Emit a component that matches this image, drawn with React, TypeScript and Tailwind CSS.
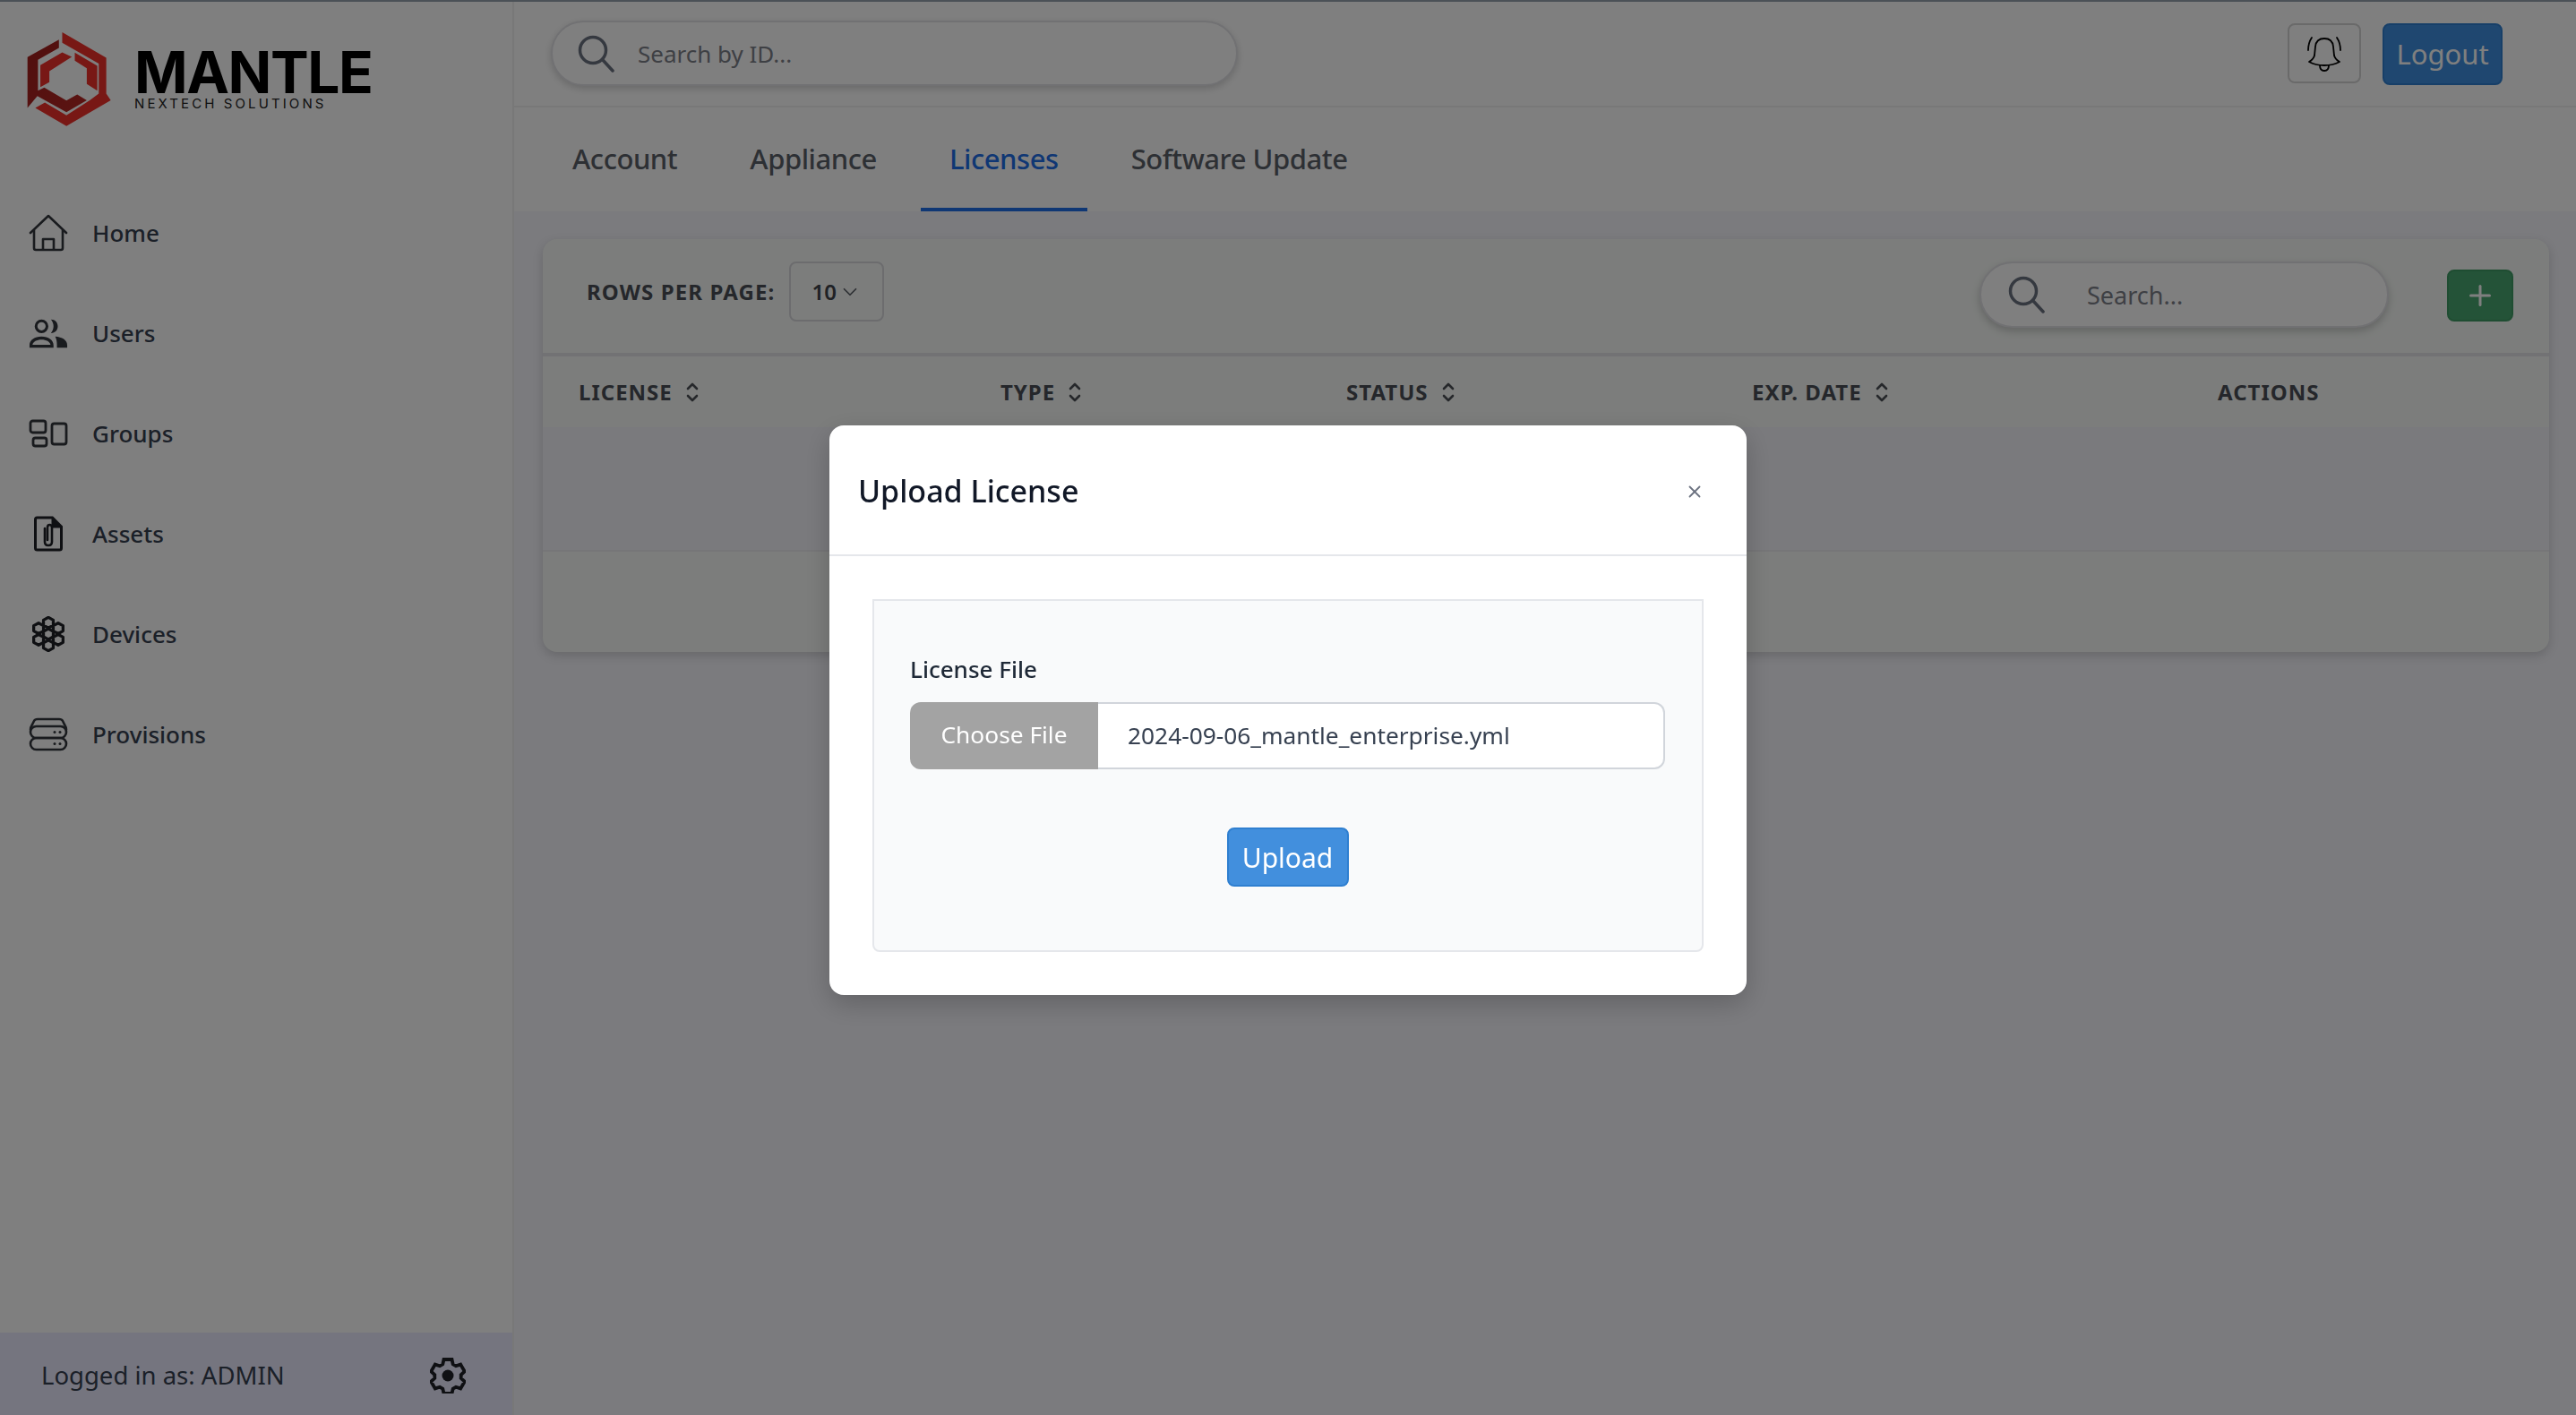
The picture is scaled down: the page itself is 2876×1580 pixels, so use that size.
import { ChevronDown, Plus, X } from "lucide-react";

const navItems = [
  { label: "Home", icon: <HomeIcon /> },
  { label: "Users", icon: <UsersIcon /> },
  { label: "Groups", icon: <GroupsIcon /> },
  { label: "Assets", icon: <AssetsIcon /> },
  { label: "Devices", icon: <DevicesIcon /> },
  { label: "Provisions", icon: <ProvisionsIcon /> },
];

const columns = ["LICENSE", "TYPE", "STATUS", "EXP. DATE"];

function HomeIcon() {
  return (
    <svg width="44" height="42" viewBox="0 0 44 42" fill="none" stroke="#33363d" strokeWidth="2.6" strokeLinejoin="round">
      <path d="M2 21 22 2l20 19" strokeLinecap="round" />
      <path d="M6 18v20q0 2 2 2h28q2 0 2-2V18" />
      <path d="M16 40V28h12v12" />
    </svg>
  );
}

function UsersIcon() {
  return (
    <svg width="46" height="34" viewBox="0 0 46 34" fill="#33363d">
      <path fillRule="evenodd" d="M15 1a8 8 0 1 1 0 16 8 8 0 0 1 0-16Zm0 3.200a4.800 4.800 0 1 0 0 9.600 4.800 4.800 0 0 0 0-9.600Z" />
      <path d="M26 1c5 0 8 3.500 8 8s-3 8-8 8c2-2.500 3-5 3-8s-1-5.500-3-8Z" />
      <path fillRule="evenodd" d="M1 34v-3c0-6 6-10 14-10s14 4 14 10v3H1Zm3.500-3.500h21c-.5-3.500-5-6-10.500-6s-10 2.500-10.500 6Z" />
      <path d="M31 21c8 .5 14 4 14 10v3H33v-4c0-3-.5-6-2-9Z" />
    </svg>
  );
}

function GroupsIcon() {
  return (
    <svg width="44" height="32" viewBox="0 0 44 32" fill="none" stroke="#33363d" strokeWidth="2.8">
      <rect x="2" y="2" width="17" height="13" rx="2.500" />
      <rect x="5" y="21" width="15" height="9" rx="2.500" />
      <rect x="26" y="5" width="16" height="23" rx="2.500" />
    </svg>
  );
}

function AssetsIcon() {
  return (
    <svg width="34" height="40" viewBox="0 0 34 40" fill="none" stroke="#1f2126">
      <path d="M2.500 4q0-2 2-2h17l10 10v24q0 2-2 2h-25q-2 0-2-2Z" strokeWidth="3" />
      <path d="M21 2l11 11H21Z" fill="#1f2126" strokeWidth="1" />
      <path d="M13 15v15q0 4 4 4t4-4V14q0-3-2.500-3T16 14v14" strokeWidth="2.600" strokeLinecap="round" transform="translate(0 -1)" />
    </svg>
  );
}

function DevicesIcon() {
  const hexes = [[20, 8], [20, 22], [20, 36], [8, 15], [32, 15], [8, 29], [32, 29]];
  return (
    <svg width="38" height="40" viewBox="0 0 40 44" fill="none" stroke="#1f2126" strokeWidth="3.600" strokeLinejoin="round">
      {hexes.map(([x, y]) => (
        <path key={`${x}-${y}`} d={`M${x} ${y - 6.500}l6 3.250v6.500l-6 3.250-6-3.250v-6.500Z`} />
      ))}
    </svg>
  );
}

function ProvisionsIcon() {
  return (
    <svg width="44" height="38" viewBox="0 0 44 38" fill="none" stroke="#33363d" strokeWidth="2.600">
      <path d="M2 14q0-3 2-6l2-4q1-2 4-2h24q3 0 4 2l2 4q2 3 2 6" />
      <rect x="2" y="10" width="40" height="13" rx="6.500" />
      <rect x="2" y="23" width="40" height="13" rx="6.500" />
      <g fill="#33363d" stroke="none">
        <circle cx="29" cy="16.500" r="1.500" />
        <circle cx="35" cy="16.500" r="1.500" />
        <circle cx="29" cy="29.500" r="1.500" />
        <circle cx="35" cy="29.500" r="1.500" />
      </g>
    </svg>
  );
}

function GearIcon() {
  return (
    <svg width="40" height="40" viewBox="0 0 40 40" fill="none" stroke="#1f2126" strokeWidth="3.800" strokeLinejoin="miter">
      <path d="M15.500 2h9l1.200 5.300 3.300 1.900 5.200-1.600 4.500 7.800-4 3.700v3.800l4 3.700-4.500 7.800-5.200-1.600-3.300 1.900-1.200 5.300h-9l-1.200-5.300-3.300-1.900-5.200 1.600-4.500-7.800 4-3.700v-3.800l-4-3.700 4.500-7.800 5.200 1.600 3.300-1.900Z" />
      <circle cx="20" cy="20" r="6.500" fill="#1f2126" stroke="none" />
    </svg>
  );
}

function SearchIcon({ color }: { color: string }) {
  return (
    <svg width="42" height="42" viewBox="0 0 42 42" fill="none" stroke={color} strokeWidth="3.500" strokeLinecap="round">
      <circle cx="17" cy="17" r="14.500" />
      <path d="m28 28 11 12" />
    </svg>
  );
}

function BellIcon() {
  return (
    <svg width="40" height="40" viewBox="0 0 40 40" fill="none" stroke="#000" strokeWidth="1.800" strokeLinecap="round" strokeLinejoin="round">
      <path d="M3 29q5-3 6-7l1-10q1-9 10-9t10 9l1 10q1 4 6 7-7 4-17 4T3 29Z" />
      <path d="M15 33q0 6 5 6t5-6" />
      <path d="M2 16Q2 8 6 2M38 16q0-8-4-14" />
    </svg>
  );
}

function SortIcon() {
  return (
    <svg width="14" height="22" viewBox="0 0 14 22" fill="none" stroke="#4d5056" strokeWidth="2.600" strokeLinecap="round" strokeLinejoin="round">
      <path d="m2 7 5-5 5 5" />
      <path d="m2 15 5 5 5-5" />
    </svg>
  );
}

function Logo() {
  return (
    <svg width="95" height="107" viewBox="90 42 284 320">
      <defs>
        <linearGradient id="mantleDark" x1="0" y1="0" x2="1" y2="1">
          <stop offset="0" stopColor="#a01f1c" />
          <stop offset="1" stopColor="#b82825" />
        </linearGradient>
      </defs>
      <path fill="url(#mantleDark)" d="M92 128 197 70v27l-70 40v103l21-10 74 43 36-20 32 19-68 40-97-54-33 40Z" />
      <path fill="#f0302a" d="m208 45 147 85v120l15 22-148 86-104-60 32-18 72 42 78-50 30-22V150L208 80Z" />
      <path fill="#f0302a" d="m250 113 75 44v83l-35-22v-53l-40-25ZM240 127l-75 48v37l-30 16v-73l73-43Z" />
    </svg>
  );
}

function Sidebar() {
  return (
    <aside className="flex h-full w-[574px] shrink-0 flex-col border-r-2 border-[#f0f0f0] bg-white">
      <div className="flex items-start gap-[25px] pl-[30px] pt-[33px]">
        <Logo />
        <div className="pt-[21px] [font-family:Inter,sans-serif] text-black">
          <div className="text-[64px] leading-[50px] font-bold tracking-[-1.4px]">MANTLE</div>
          <div className="mt-[1px] text-[15px] leading-[18px] tracking-[3.1px] text-[#222]">NEXTECH SOLUTIONS</div>
        </div>
      </div>
      <nav className="mt-[62px] flex flex-col">
        {navItems.map((item) => (
          <a key={item.label} className="flex h-[112px] items-center text-[26px] font-medium text-[#374151]">
            <span className="flex w-[103px] shrink-0 justify-center pl-[5px]">
              <span className="flex w-[44px] justify-center">{item.icon}</span>
            </span>
            {item.label}
          </a>
        ))}
      </nav>
      <div className="mt-auto flex h-[92px] items-center justify-between bg-[#eaeaff] pl-[46px] pr-[52px] pt-[4px] text-[27.500px] text-[#374151]">
        <span>Logged in as: ADMIN</span>
        <GearIcon />
      </div>
    </aside>
  );
}

function TopBar() {
  return (
    <header className="flex h-[118px] shrink-0 items-start justify-between border-b-2 border-[#f0f0f0] bg-white pl-[41px] pr-[82px] pt-[21px]">
      <div className="flex h-[73px] w-[767px] items-center gap-[25px] rounded-full border-2 border-[#e2e2e6] bg-white pl-[28px] shadow-[0_3px_8px_rgba(0,0,0,0.18)]">
        <SearchIcon color="#6b7280" />
        <span className="pt-[2px] text-[26px] text-[#7d8089]">Search by ID...</span>
      </div>
      <div className="flex items-start gap-[24px] pt-[3px]">
        <button className="flex h-[67px] w-[82px] items-center justify-center rounded-lg border-2 border-[#d4d4d4]">
          <BellIcon />
        </button>
        <button className="h-[69px] w-[134px] rounded-lg border-2 border-[#2f7fd0] bg-[#3f8fe0] text-[31px] text-white">Logout</button>
      </div>
    </header>
  );
}

function Tabs() {
  const tabs = ["Account", "Appliance", "Licenses", "Software Update"];
  return (
    <div className="flex h-[116px] shrink-0 gap-[17px] bg-white pl-[33px] text-[31px] font-medium tracking-[-0.45px] text-[#5b6069]">
      {tabs.map((tab) => (
        <div
          key={tab}
          className={
            tab === "Licenses"
              ? "flex items-center border-b-4 border-[#1f6fe8] px-[32px] pt-[2px] text-[#1f6fe8]"
              : "flex items-center border-b-4 border-transparent px-[32px] pt-[2px]"
          }
        >
          {tab}
        </div>
      ))}
    </div>
  );
}

function LicenseCard() {
  return (
    <section className="flex h-[461px] flex-col overflow-hidden rounded-2xl bg-[#f8fbf8] shadow-[0_4px_12px_rgba(0,0,0,0.16)]">
      <div className="flex h-[131px] shrink-0 items-start justify-between border-b-[4px] border-[#e4e4e8] pl-[49px] pr-[40px] pt-[25px]">
        <div className="flex items-center gap-[16px]">
          <span className="text-[24px] font-bold tracking-[1.1px] text-[#4b4f57]">ROWS PER PAGE:</span>
          <div className="flex h-[67px] w-[106px] items-center justify-center gap-[2px] rounded-lg border-2 border-[#d8d8dc] text-[24px] font-semibold text-[#3f434b]">
            10
            <ChevronDown size={26} strokeWidth={1.6} color="#5c6068" />
          </div>
        </div>
        <div className="flex items-start gap-[65px]">
          <div className="flex h-[74px] w-[457px] items-center gap-[46px] rounded-full border-2 border-[#e2e2e6] bg-white pl-[30px] shadow-[0_4px_10px_rgba(0,0,0,0.2)]">
            <SearchIcon color="#6b7280" />
            <span className="pt-[2px] text-[27px] text-[#7d8089]">Search...</span>
          </div>
          <button className="mt-[9px] flex h-[58px] w-[74px] items-center justify-center rounded-lg border-2 border-[#3f9a64] bg-[#48a670]">
            <Plus size={36} strokeWidth={2} color="white" />
          </button>
        </div>
      </div>
      <div className="grid h-[79px] shrink-0 grid-cols-[471px_386px_453px_520px_1fr] items-center pl-[40px] pt-[1px] text-[24px] font-bold tracking-[1px] text-[#4b4f57]">
        {columns.map((col) => (
          <div key={col} className="flex items-center gap-[15px]">
            {col}
            <SortIcon />
          </div>
        ))}
        <div>ACTIONS</div>
      </div>
      <div className="h-[139px] shrink-0 border-b-2 border-[#ececf0] bg-[#f5f5fa]" />
    </section>
  );
}

function UploadModal() {
  return (
    <div className="fixed inset-0 flex items-start justify-center bg-black/50 pt-[475px]">
      <div className="h-[636px] w-[1024px] rounded-2xl bg-white shadow-[0_10px_30px_rgba(0,0,0,0.2)]">
        <div className="flex h-[146px] items-center justify-between border-b-2 border-[#e5e7eb] pl-[32px] pr-[47px] pt-[3px]">
          <h2 className="text-[34px] font-medium text-[#111827]">Upload License</h2>
          <X size={22} strokeWidth={2} color="#6b7280" />
        </div>
        <div className="px-[48px] pt-[48px]">
          <div className="h-[394px] rounded-b-lg border-2 border-[#e5e7eb] bg-[#f9fafb] pl-[40px] pr-[41px] pt-[58px]">
            <div className="text-[26px] font-medium leading-[36px] text-[#1f2937]">License File</div>
            <div className="mt-[19px] flex h-[75px] items-stretch text-[26.300px]">
              <div className="flex w-[210px] items-center justify-center rounded-l-xl bg-[#a3a3a3] pb-[1px] text-white">Choose File</div>
              <div className="flex flex-1 items-center rounded-r-xl border-y-2 border-r-2 border-[#d1d5db] bg-white pl-[33px] text-[#374151]">2024-09-06_mantle_enterprise.yml</div>
            </div>
            <div className="mt-[65px] flex justify-center">
              <button className="h-[66px] w-[136px] rounded-lg border-2 border-[#2f7fd0] bg-[#428fdd] text-[30px] text-white">Upload</button>
            </div>
          </div>
        </div>
      </div>
    </div>
  );
}

export default function App() {
  return (
    <div className="relative flex h-[1580px] w-full flex-col overflow-hidden bg-white [font-family:'Noto_Sans',sans-serif]">
      <div className="h-[2px] shrink-0 bg-[#97a3af]" />
      <div className="flex min-h-0 flex-1">
        <Sidebar />
        <main className="flex min-w-0 flex-1 flex-col bg-[#f6f6fc]">
          <TopBar />
          <Tabs />
          <div className="pl-[32px] pr-[30px] pt-[31px]">
            <LicenseCard />
          </div>
        </main>
      </div>
      <UploadModal />
    </div>
  );
}
